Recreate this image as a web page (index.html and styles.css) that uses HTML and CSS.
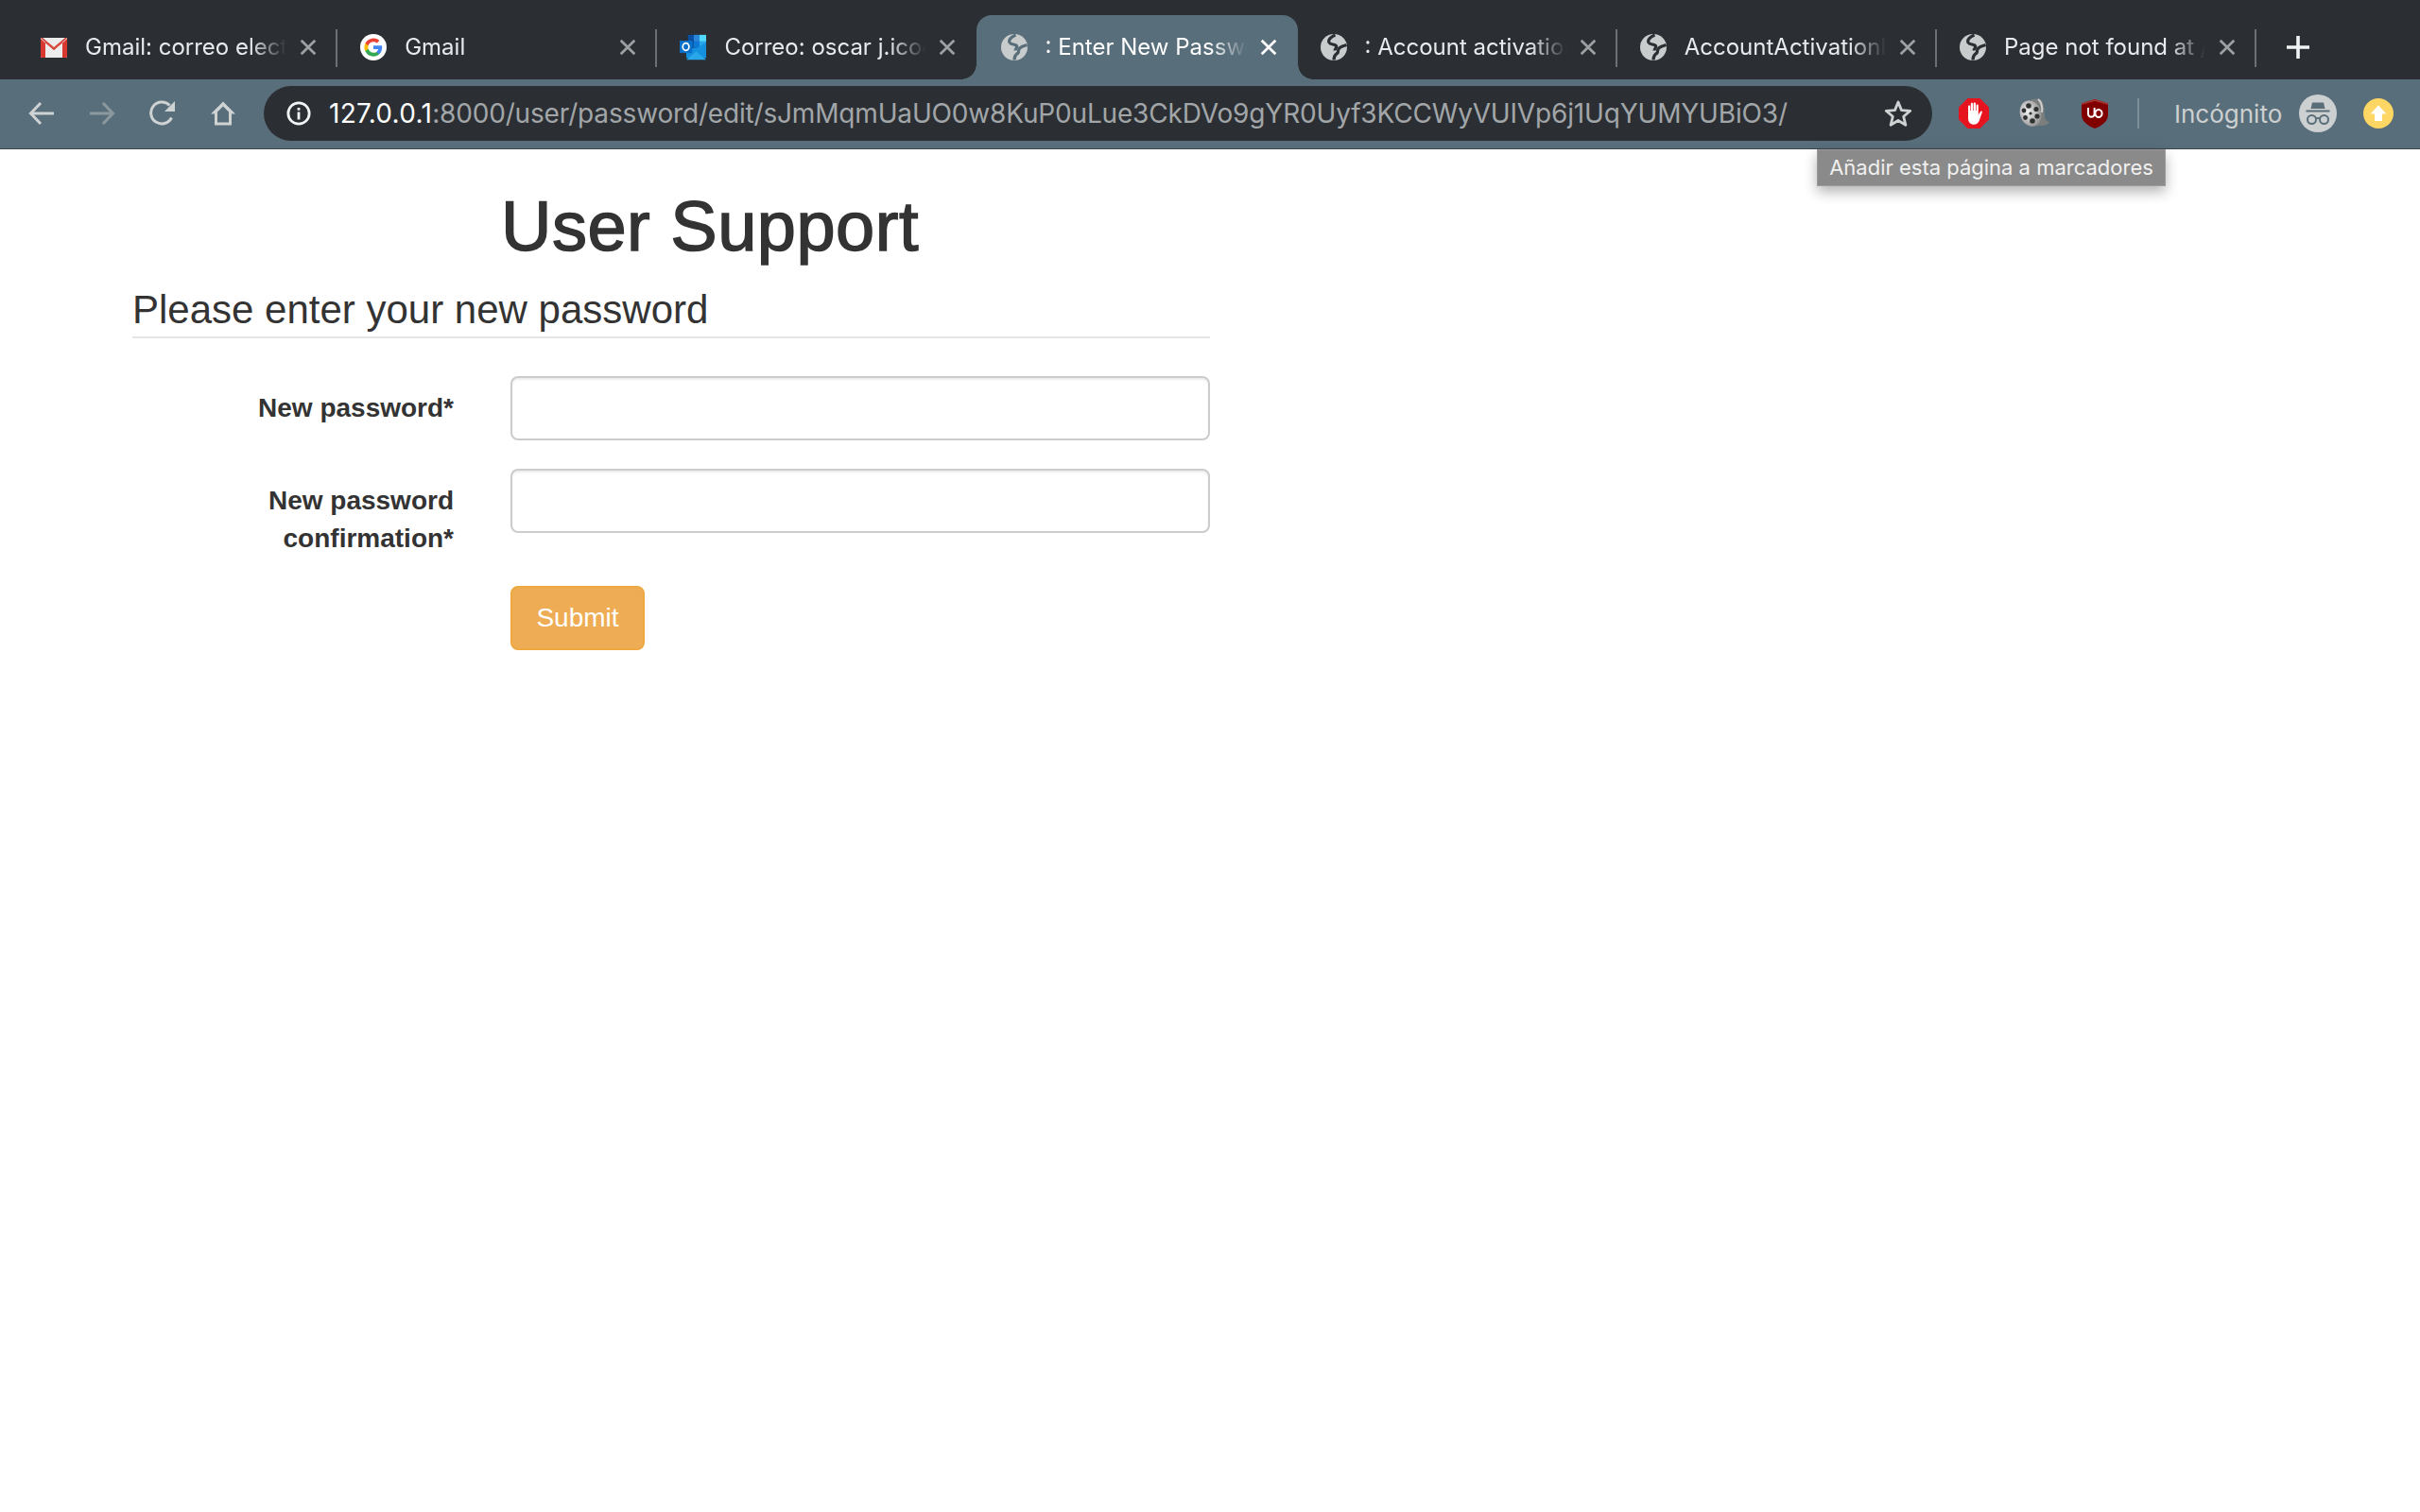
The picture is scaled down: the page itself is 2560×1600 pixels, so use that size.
FILE: index.html
```html
<!DOCTYPE html>
<html lang="es">
<head>
<meta charset="utf-8">
<title>Enter New Password</title>
<link rel="stylesheet" href="styles.css">
</head>
<body>
<svg class="defs" width="0" height="0" aria-hidden="true">
  <symbol id="globe" viewBox="0 0 28 28">
    <circle cx="14" cy="14" r="14" fill="#c9cccd"/>
    <path class="globe-land" d="M15.500 1C11 3 7.500 6 9 9c1.500 2.500 6 1.500 7.500 3.500 1 2-1.500 3-1.500 5" fill="none" stroke="currentColor" stroke-width="3.200"/>
    <path class="globe-land" d="M27.500 11.500c-3 1.500-6.500 1-8.500 4.500-1 2 0 3-1 4-1.500 1.500-4 2-4 7.500" fill="none" stroke="currentColor" stroke-width="3.200"/>
  </symbol>
  <symbol id="close" viewBox="0 0 16 16">
    <path d="M1.500 1.500l13 13M14.500 1.500l-13 13" fill="none" stroke="currentColor" stroke-width="2.400"/>
  </symbol>
</svg>

<header class="chrome">
  <div class="tabstrip">
    <div class="tab">
      <svg class="favicon" viewBox="0 0 28 28"><path d="M0 4h28v21H0z" fill="#ececec"/><path d="M0 4h2l12 10L26 4h2L14 17 0 4z" fill="#c9362c"/><path d="M0 5l5 4.500V25H1a1 1 0 0 1-1-1zM28 5l-5 4.500V25h4a1 1 0 0 0 1-1z" fill="#d8382f"/><path d="M5 9.500L14 17l9-7.500V7l-9 7.500L5 7z" fill="#dd4b3e"/></svg>
      <span class="title">Gmail: correo electrónico</span>
      <svg class="close"><use href="#close"/></svg>
    </div>
    <div class="tab">
      <svg class="favicon" viewBox="0 0 32 32"><circle cx="16" cy="16" r="16" fill="#fff"/><path d="M26.500 16.300c0-.8-.1-1.500-.2-2.200H16v4.200h5.900c-.3 1.300-1 2.500-2.200 3.300v2.700h3.500c2.100-1.900 3.300-4.700 3.300-8z" fill="#4285f4"/><path d="M16 27c3 0 5.400-1 7.200-2.700l-3.500-2.700c-1 .7-2.200 1-3.700 1-2.900 0-5.300-1.900-6.200-4.500H6.200v2.800A11 11 0 0 0 16 27z" fill="#34a853"/><path d="M9.800 18.100a6.600 6.600 0 0 1 0-4.200v-2.800H6.200a11 11 0 0 0 0 9.800z" fill="#fbbc05"/><path d="M16 9.400c1.600 0 3 .6 4.100 1.600l3.100-3.100A11 11 0 0 0 6.200 11.100l3.600 2.800c.9-2.600 3.300-4.500 6.200-4.500z" fill="#ea4335"/></svg>
      <span class="title">Gmail</span>
      <svg class="close"><use href="#close"/></svg>
    </div>
    <div class="tab">
      <svg class="favicon" viewBox="0 0 32 32"><path d="M10 1h14v8H10z" fill="#0a4ea3"/><path d="M17 1h7v8h-7z" fill="#2a86d8"/><path d="M24 1h8v8h-8z" fill="#50d9ff"/><path d="M17 9h7v8h-7z" fill="#0f78d4"/><path d="M24 9h8v8h-8z" fill="#28a8ea"/><path d="M10 9h7v8h-7z" fill="#0364b8"/><path d="M8 17l12 0 12-7v19H8z" fill="#1490df"/><path d="M8 31l12-10 12 10z" fill="#28a8ea"/><path d="M0 8h15v15H0z" fill="#0a6fc9"/><ellipse cx="7.500" cy="15.500" rx="3.800" ry="4.400" fill="none" stroke="#fff" stroke-width="2"/></svg>
      <span class="title">Correo: oscar j.icochea</span>
      <svg class="close"><use href="#close"/></svg>
    </div>
    <div class="tab tab-active">
      <svg class="favicon"><use href="#globe"/></svg>
      <span class="title">: Enter New Password</span>
      <svg class="close"><use href="#close"/></svg>
    </div>
    <div class="tab tab-after-active">
      <svg class="favicon"><use href="#globe"/></svg>
      <span class="title">: Account activation</span>
      <svg class="close"><use href="#close"/></svg>
    </div>
    <div class="tab">
      <svg class="favicon"><use href="#globe"/></svg>
      <span class="title">AccountActivationRequest</span>
      <svg class="close"><use href="#close"/></svg>
    </div>
    <div class="tab">
      <svg class="favicon"><use href="#globe"/></svg>
      <span class="title">Page not found at /user</span>
      <svg class="close"><use href="#close"/></svg>
    </div>
    <svg class="newtab" viewBox="0 0 26 26"><path d="M13 1v24M1 13h24" fill="none" stroke="#f1f3f4" stroke-width="3.600"/></svg>
  </div>

  <div class="toolbar">
    <div class="nav">
      <svg class="navicon" viewBox="0 0 28 28"><path d="M27 14H3M13 3L2.500 14 13 25" fill="none" stroke="#cfd2d3" stroke-width="3"/></svg>
      <svg class="navicon" viewBox="0 0 28 28"><path d="M1 14h24M15 3l10.500 11L15 25" fill="none" stroke="#8b999f" stroke-width="3"/></svg>
      <svg class="navicon" viewBox="0 0 28 28"><path d="M23.500 18.500A11.500 11.500 0 1 1 21.500 5.500" fill="none" stroke="#cfd2d3" stroke-width="3"/><path d="M27 1v11H16z" fill="#cfd2d3"/></svg>
      <svg class="navicon" viewBox="0 0 28 28"><path d="M14 1.500L1 14.500H5V26.500h18V14.500h4z M14 6.500l6 6v11H8v-11z" fill="#cfd2d3" fill-rule="evenodd"/></svg>
    </div>
    <div class="omnibox">
      <svg class="info" viewBox="0 0 28 28"><circle cx="14" cy="14" r="12" fill="none" stroke="#f1f3f4" stroke-width="3"/><path d="M12.500 12.500h3V21h-3zM12.500 7.500h3v3h-3z" fill="#f1f3f4"/></svg>
      <div class="url"><span class="host">127.0.0.1</span>:8000/user/password/edit/sJmMqmUaUO0w8KuP0uLue3CkDVo9gYR0Uyf3KCCWyVUIVp6j1UqYUMYUBiO3/</div>
      <svg class="star" viewBox="0 0 30 30"><path d="M15 3l3.500 8.600 9.300.7-7.100 6 2.200 9L15 22.500l-7.900 4.800 2.200-9-7.100-6 9.300-.7z" fill="none" stroke="#cfd2d3" stroke-width="2.800" stroke-linejoin="round"/></svg>
    </div>
    <div class="extensions">
      <svg class="ext" viewBox="0 0 32 32"><path d="M9.500 0h13L32 9.500v13L22.500 32h-13L0 22.500v-13z" fill="#e5141f"/><path d="M10 14V8.500c0-1.500 2.200-1.500 2.200 0V13h.6V5.800c0-1.500 2.300-1.500 2.300 0V13h.6V5.500c0-1.500 2.300-1.500 2.300 0V13h.6V7.500c0-1.500 2.200-1.500 2.200 0V18l.6-1.500 1.500-2.300c.8-1.200 2.500-.4 1.900.9L22 23c-1 3-3 4.800-6 4.800-3.500 0-6-2.500-6-6.500z" fill="#fff"/></svg>
      <svg class="ext" viewBox="0 0 32 32"><defs><radialGradient id="reel" cx=".4" cy=".4" r=".7"><stop offset="0" stop-color="#f2f2f2"/><stop offset="1" stop-color="#8a8a8a"/></radialGradient></defs><path d="M13 1l8-.5c4 1.500 6 7 5.500 14l1 8 4.500 3c-2 3-7 4-11 3.500l-8 1z" fill="#7a7f7d"/><path d="M20 1c3 2 5 8 4 14" fill="none" stroke="#d0d0d0" stroke-width="2"/><ellipse cx="12" cy="16" rx="11" ry="14" transform="rotate(-18 12 16)" fill="url(#reel)"/><g fill="#2f3232"><circle cx="12" cy="16" r="1.600"/><circle cx="10" cy="8" r="2.800"/><circle cx="14" cy="24" r="2.800"/><circle cx="5" cy="13" r="2.400"/><circle cx="18" cy="11.500" r="2.600"/><circle cx="6.500" cy="20.500" r="2.400"/><circle cx="19" cy="19" r="2.600"/></g></svg>
      <svg class="ext" viewBox="0 0 32 32"><path d="M16 1l14 4.500v12C30 24 24 29 16 32 8 29 2 24 2 17.500v-12z" fill="#800000"/><path d="M16 1l14 4.500V7L16 3 2 7V5.500z" fill="#a33"/><path d="M9 10v6.500a3.300 3.300 0 0 0 6.600 0V10" fill="none" stroke="#fff" stroke-width="2"/><ellipse cx="20" cy="16" rx="3.600" ry="4" fill="none" stroke="#fff" stroke-width="2"/></svg>
    </div>
    <span class="divider"></span>
    <span class="incognito-label">Incógnito</span>
    <svg class="incognito" viewBox="0 0 40 40"><circle cx="20" cy="20" r="20" fill="#cdd0d1"/><path d="M14 8.500h12l1.500 6.500h-15zM7.500 16.500h25v2h-25z" fill="#5a6e79"/><g fill="none" stroke="#5a6e79" stroke-width="2"><circle cx="13.500" cy="26.500" r="4.500"/><circle cx="26.500" cy="26.500" r="4.500"/><path d="M18 25.500q2-1.200 4 0"/></g></svg>
    <svg class="update" viewBox="0 0 32 32"><circle cx="16" cy="16" r="16" fill="#fdd663"/><path d="M16 7.500l8.500 9H20V24h-8v-7.500H7.500z" fill="#fff"/></svg>
  </div>
</header>

<div class="tooltip">Añadir esta página a marcadores</div>

<main class="page">
  <h1 class="heading">User Support</h1>
  <form class="form">
    <h2 class="legend">Please enter your new password</h2>
    <div class="row">
      <label class="label" for="p1">New password*</label>
      <input class="input" id="p1" type="password">
    </div>
    <div class="row">
      <label class="label" for="p2">New password confirmation*</label>
      <input class="input" id="p2" type="password">
    </div>
    <div class="row row-actions">
      <button class="submit" type="button">Submit</button>
    </div>
  </form>
</main>
</body>
</html>
```

FILE: styles.css
```css
* { box-sizing: border-box; }
html, body { margin: 0; height: 100%; background: #fff; }
body { font-family: "Liberation Sans", Arial, sans-serif; color: #333; overflow: hidden; position: relative; }
.defs { position: absolute; }

.chrome { font-family: Inter, "Noto Sans", sans-serif; }
.tabstrip { height: 84px; background: #2b2f33; display: flex; padding: 16px 0 0 19px; }
.tab { width: 338.2px; height: 68px; flex: none; display: flex; align-items: center; padding: 0 0 0 24px; position: relative; color: #e8eaed; }
.tab::after { content: ""; position: absolute; right: 0; top: 15px; width: 2px; height: 40px; background: #6c7073; }
.favicon { width: 28px; height: 28px; flex: none; color: #2b2f33; }
.title { width: 213px; margin-left: 19px; flex: none; font-size: 24px; line-height: 34px; white-space: nowrap; overflow: hidden;
  -webkit-mask-image: linear-gradient(to right, #000 82%, transparent 100%);
  mask-image: linear-gradient(to right, #000 82%, transparent 100%); }
.close { width: 18px; height: 18px; flex: none; margin-left: 14px; color: #9ea1a3; }
.tab-active { background: #586e7a; border-radius: 16px 16px 0 0; color: #fff; width: 340px; margin-left: -1px; padding-left: 26px; }
.tab-active::after { display: none; }
.tab-active::before { content: ""; position: absolute; left: -16px; bottom: 0; width: 16px; height: 16px; background: radial-gradient(circle at 0 0, transparent 15.5px, #586e7a 16px); }
.tab-active .close { color: #fff; }
.tab-active .favicon { color: #586e7a; }
.tab-after-active::before { content: ""; position: absolute; left: 0; bottom: 0; width: 16px; height: 16px; background: radial-gradient(circle at 100% 0, transparent 15.5px, #586e7a 16px); }
.tab:nth-child(3)::after { display: none; }
.newtab { width: 26px; height: 26px; margin: 21px 0 0 31px; flex: none; }

.toolbar { height: 74px; background: #586e7a; border-bottom: 1px solid #3c4549; display: flex; align-items: center; padding: 0 0 2px 30px; }
.nav { display: flex; gap: 36px; width: 249px; flex: none; }
.navicon { width: 28px; height: 28px; flex: none; }
.omnibox { width: 1765px; height: 58px; flex: none; background: #2b2f33; border-radius: 29px; display: flex; align-items: center; padding: 0 0 0 24px; color: #a2a6a9; }
.info { width: 26px; height: 26px; flex: none; }
.url { margin-left: 19px; width: 1625px; font-size: 28px; letter-spacing: -0.17px; white-space: nowrap; flex: none; }
.host { color: #fff; letter-spacing: 0.3px; }
.star { width: 30px; height: 30px; flex: none; margin-left: 20px; }
.extensions { display: flex; gap: 32px; margin-left: 28px; flex: none; }
.ext { width: 32px; height: 32px; flex: none; }
.divider { width: 2px; height: 32px; background: #7d8f98; margin-left: 29px; flex: none; }
.incognito-label { margin-left: 37px; font-size: 26px; line-height: 36px; padding-top: 2px; color: #cdd0d1; flex: none; width: 114px; white-space: nowrap; }
.incognito { width: 40px; height: 40px; margin-left: 18px; flex: none; }
.update { width: 32px; height: 32px; margin-left: 28px; flex: none; }

.tooltip { position: absolute; left: 1922px; top: 158px; width: 369px; height: 39px; background: #8a8a8a; border: 1px solid #9b9b9b; color: #f0f0f0; font: 22px/36px Inter, sans-serif; text-align: center; white-space: nowrap; box-shadow: 0 6px 14px rgba(0,0,0,.3); }

.page { padding: 0 0 0 140px; width: 1280px; }
.heading { margin: 0; padding: 42px 0 0 390px; height: 132px; font-size: 74px; line-height: 80px; font-weight: 400; letter-spacing: 0.5px; white-space: nowrap; -webkit-text-stroke: 1.5px #333; }
.form { display: block; }
.legend { margin: 0 0 40px; font-size: 42px; line-height: 60px; height: 68px; padding-top: 8px; font-weight: 400; color: #333; border-bottom: 2px solid #e5e5e5; }
.row { display: flex; align-items: flex-start; gap: 60px; margin-bottom: 30px; }
.label { width: 340px; flex: none; text-align: right; font-weight: 700; font-size: 28px; line-height: 40px; padding-top: 14px; }
.input { width: 740px; height: 68px; border: 2px solid #ccc; border-radius: 8px; background: #fff; box-shadow: inset 0 2px 2px rgba(0,0,0,.075); flex: none; }
.row-actions { padding-left: 400px; margin-top: 26px; }
.submit { width: 142px; height: 68px; background: #eead55; border: 2px solid #eda840; border-radius: 8px; color: #fff; font: 28px "Liberation Sans", Arial, sans-serif; padding: 0; }
```
